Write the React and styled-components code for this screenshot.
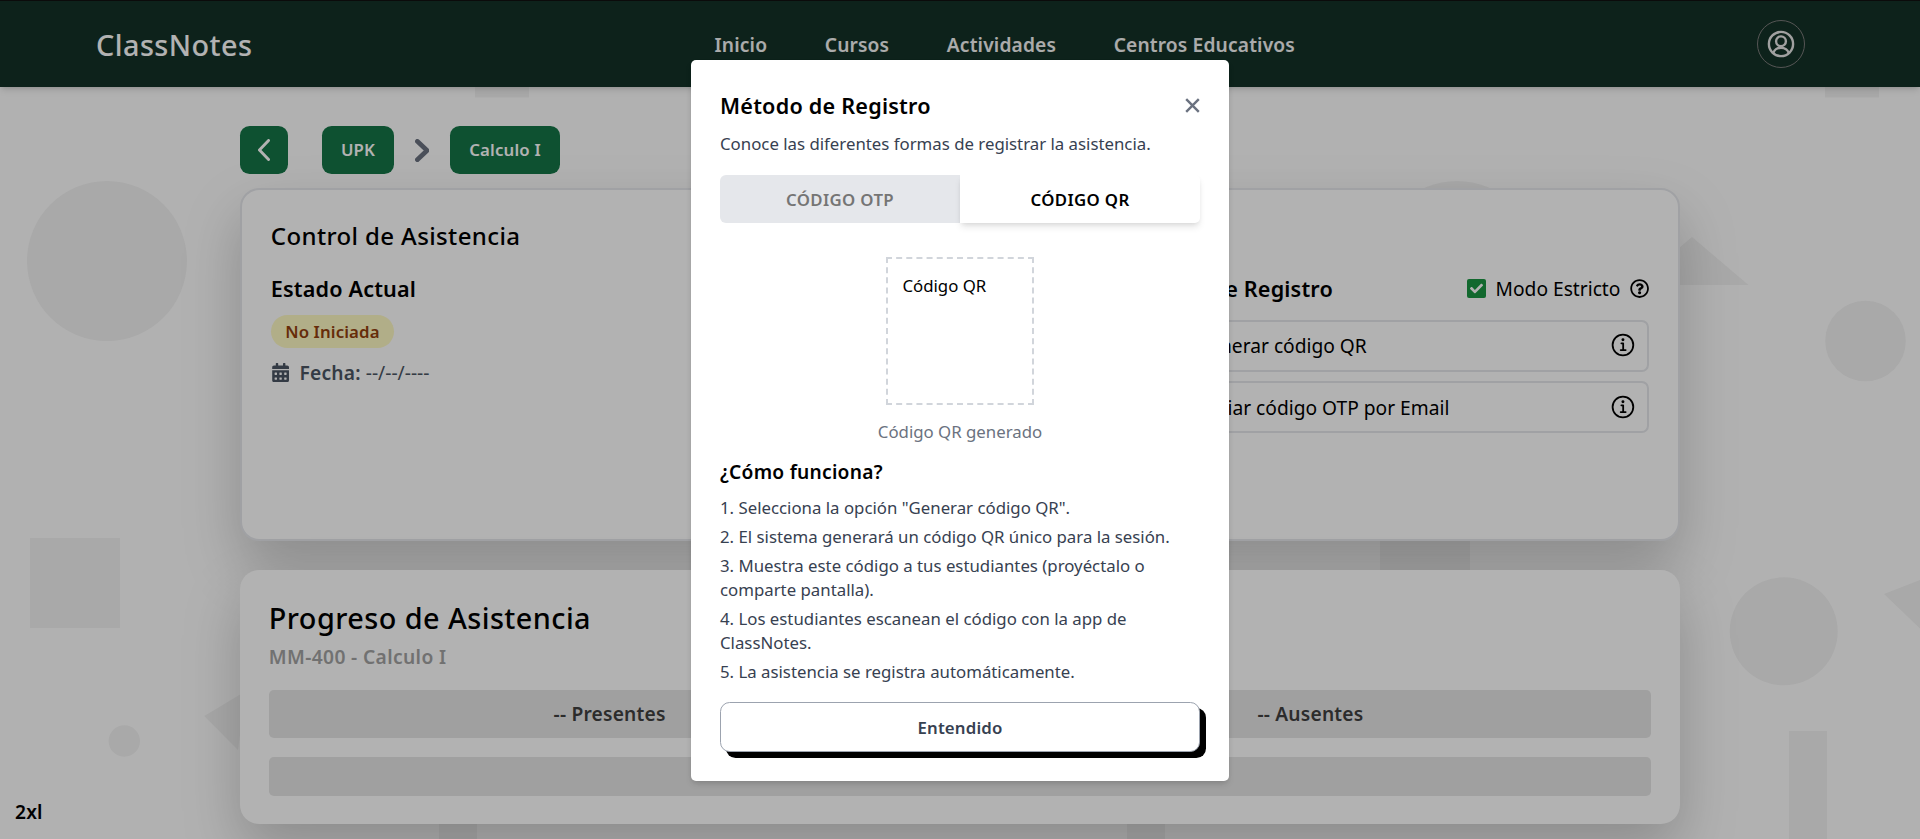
import React from 'react';
import styled, { createGlobalStyle } from 'styled-components';
import { FaCalendarAlt, FaCheck, FaRegQuestionCircle } from 'react-icons/fa';
import { IoInformationCircleOutline } from 'react-icons/io5';

const GlobalStyle = createGlobalStyle`
  *, *::before, *::after { box-sizing: border-box; }
  html { font-size: 19.2px; }
  body {
    margin: 0;
    overflow: hidden;
    background: #fff;
    color: #000;
    font-family: "Noto Sans", sans-serif;
    line-height: 1.5;
  }
  h1, h2, h3, p, ol { margin: 0; padding: 0; font-weight: inherit; }
  button { font: inherit; border: 0; cursor: pointer; }
  svg { display: block; flex-shrink: 0; }
`;

const Page = styled.div`
  position: relative;
  height: 839px;
  overflow: hidden;
  background: #fefefe;
`;

const Backdrop = styled.svg`
  position: absolute;
  inset: 0;
  fill: #f2f2f2;
`;

const Header = styled.header`
  position: relative;
  display: flex;
  align-items: center;
  justify-content: space-between;
  height: 87px;
  padding: 0 115px 0 96px;
  border-top: 1px solid #101010;
  background: #143227;
  box-shadow: 0 4px 7px -1px rgba(0, 0, 0, 0.12), 0 2px 4px -2px rgba(0, 0, 0, 0.12);
`;

const Brand = styled.div`
  padding-top: 2px;
  color: #fff;
  font-size: 1.5rem;
  font-weight: 500;
  letter-spacing: 0.45px;
  line-height: 2rem;
`;

const Nav = styled.nav`
  display: flex;
  gap: 3rem;
  padding-top: 2px;
`;

const NavLink = styled.a`
  color: #f5f5f5;
  font-weight: 600;
  letter-spacing: 0.15px;
`;

const Avatar = styled.div`
  display: grid;
  place-items: center;
  width: 48px;
  height: 48px;
  border: 1px solid #7a7a7a;
  border-radius: 50%;
  color: #e5e5e5;
`;

const Main = styled.main`
  position: relative;
  width: 1440px;
  margin: 0 auto;
  padding-top: 39px;
`;

const Breadcrumb = styled.div`
  display: flex;
  align-items: center;
  height: 48px;
  margin-bottom: 14px;
`;

const Crumb = styled.button`
  display: grid;
  place-items: center;
  height: 48px;
  width: ${(p) => p.$width};
  margin-left: ${(p) => p.$gap || 0};
  padding: 0;
  border-radius: 9.6px;
  background: #157547;
  color: #fff;
  font-size: 0.875rem;
  font-weight: 600;
  letter-spacing: 0.15px;
`;

const Separator = styled.span`
  display: grid;
  place-items: center;
  width: 56px;
  color: #6b7280;
`;

const Card = styled.section`
  height: ${(p) => p.$height};
  margin-bottom: 29px;
  padding: 28.8px;
  border: ${(p) => (p.$bordered ? '2px solid #e5e7eb' : '0')};
  border-radius: 19.2px;
  background: #fff;
  box-shadow: 0 26px 58px rgba(0, 0, 0, 0.21);
`;

const CardTitle = styled.h2`
  margin-bottom: 1rem;
  font-size: 1.25rem;
  font-weight: 500;
  letter-spacing: 0.38px;
  line-height: 1.75rem;
`;

const Columns = styled.div`
  display: flex;
  justify-content: space-between;
`;

const StatusColumn = styled.div`
  display: flex;
  flex-direction: column;
  align-items: flex-start;
  gap: 0.5rem;
`;

const MethodColumn = styled.div`
  width: 526px;
`;

const Subheading = styled.h3`
  font-size: 1.125rem;
  font-weight: 600;
  letter-spacing: 0.16px;
  line-height: 1.75rem;
`;

const Badge = styled.span`
  padding: 0.25rem 0.75rem;
  border-radius: 99px;
  background: #fef9c3;
  color: #92400e;
  font-size: 0.875rem;
  font-weight: 600;
  letter-spacing: 0.12px;
  line-height: 1.25rem;
`;

const DateRow = styled.div`
  display: flex;
  align-items: center;
  gap: 0.5rem;
  color: #4b5563;

  span { padding-top: 1px; }
  b { font-weight: 600; letter-spacing: 0.2px; }
`;

const MethodHeader = styled.div`
  display: flex;
  align-items: center;
  justify-content: space-between;
  height: 33.6px;
  margin-bottom: 14.4px;
`;

const StrictMode = styled.label`
  display: flex;
  align-items: center;
  gap: 9.6px;
  line-height: 1.5rem;

  b { padding-top: 2px; font-weight: 400; }
`;

const CheckBox = styled.span`
  display: grid;
  place-items: center;
  width: 19px;
  height: 19px;
  border-radius: 2px;
  background: #1a9642;
  color: #fff;
  font-size: 13px;
`;

const Method = styled.div`
  display: flex;
  align-items: center;
  justify-content: space-between;
  height: 52px;
  margin-bottom: 9.6px;
  padding: 0 9.6px 0 70px;
  border: 2px solid #e5e7eb;
  border-radius: 7.2px;

  span { padding-top: 2px; }
  svg { font-size: 1.5rem; }
`;

const ProgressTitle = styled.h2`
  font-size: 1.5rem;
  font-weight: 500;
  letter-spacing: 0.45px;
  line-height: 2rem;
`;

const CourseName = styled.p`
  margin: 0.25rem 0 1rem;
  padding-top: 1px;
  height: 28.8px;
  color: #a3a3a3;
  font-weight: 600;
  letter-spacing: 0.37px;
`;

const Counters = styled.div`
  display: grid;
  grid-template-columns: 1fr 1fr;
  gap: 1rem;
  margin-bottom: 1rem;
`;

const Bar = styled.div`
  display: grid;
  place-items: center;
  height: ${(p) => (p.$slim ? '38.4px' : '48px')};
  border-radius: 4.8px;
  background: #e6e6e6;
  color: #404040;
  font-weight: 600;
  letter-spacing: 0.2px;
`;

const Overlay = styled.div`
  position: absolute;
  inset: 0;
  display: flex;
  align-items: center;
  justify-content: center;
  background: rgba(0, 0, 0, 0.3);
`;

const Dialog = styled.div`
  display: flex;
  flex-direction: column;
  width: 537.6px;
  height: 721px;
  margin-top: 2px;
  padding: 28.8px;
  border-radius: 5px;
  background: #fff;
  box-shadow: 0 4px 7px -1px rgba(0, 0, 0, 0.12), 0 2px 5px -2px rgba(0, 0, 0, 0.12);
  font-size: 0.875rem;
  line-height: 1.25rem;
`;

const DialogHeader = styled.div`
  display: flex;
  align-items: center;
  justify-content: space-between;
  height: 33.6px;
  margin-bottom: 9.6px;
`;

const DialogTitle = styled.h2`
  font-size: 1.125rem;
  font-weight: 600;
  letter-spacing: 0.22px;
`;

const CloseButton = styled.button`
  padding: 0;
  background: none;
  color: #6b7280;
`;

const Description = styled.p`
  color: #374151;
`;

const Tabs = styled.div`
  display: flex;
  height: 48px;
  margin-top: 1rem;
`;

const Tab = styled.button`
  flex: 1;
  padding-top: 2px;
  border-radius: ${(p) => (p.$active ? '0 5px 5px 0' : '6px 0 0 6px')};
  background: ${(p) => (p.$active ? '#fff' : '#e5e7eb')};
  color: ${(p) => (p.$active ? '#000' : '#757575')};
  font-weight: 600;
  letter-spacing: 0.35px;
  box-shadow: ${(p) =>
    p.$active
      ? '0 4.8px 7.2px -1.2px rgba(0,0,0,0.1), 0 2.4px 4.8px -2.4px rgba(0,0,0,0.1)'
      : 'none'};
`;

const QrFrame = styled.div`
  align-self: center;
  width: 148px;
  height: 148px;
  margin: 33.6px 0 14.4px;
  padding: 15.2px 14.4px;
  border: 2px dashed #d1d5db;
`;

const QrCaption = styled.p`
  height: 24px;
  padding-top: 1px;
  color: #6b7280;
  text-align: center;
`;

const HowTitle = styled.h3`
  margin: 14.4px 0 9.6px;
  font-size: 1rem;
  font-weight: 600;
  letter-spacing: 0.25px;
  line-height: 1.5rem;
`;

const Steps = styled.div`
  display: flex;
  flex-direction: column;
  gap: 5px;
  color: #374151;
`;

const ConfirmButton = styled.button`
  height: 50px;
  margin-top: auto;
  padding-top: 3px;
  border: 1px solid #9ca3af;
  border-radius: 9.6px;
  background: #fff;
  color: #374151;
  font-weight: 600;
  letter-spacing: 0.15px;
  box-shadow: 6px 6px 0 #000;
`;

const BreakpointTag = styled.div`
  position: absolute;
  left: 15px;
  bottom: 12px;
  font-weight: 600;
  letter-spacing: 0.2px;
`;

const NAV_ITEMS = ['Inicio', 'Cursos', 'Actividades', 'Centros Educativos'];

const METHODS = ['Generar código QR', 'Enviar código OTP por Email'];

const STEPS = [
  'Selecciona la opción "Generar código QR".',
  'El sistema generará un código QR único para la sesión.',
  'Muestra este código a tus estudiantes (proyéctalo o comparte pantalla).',
  'Los estudiantes escanean el código con la app de ClassNotes.',
  'La asistencia se registra automáticamente.',
];

function Chevron({ width, height, stroke, flip }) {
  const s = stroke / 2;
  const near = flip ? s : width - s;
  const tip = flip ? width - s : s;
  return (
    <svg width={width} height={height} fill="none" stroke="currentColor" strokeWidth={stroke} strokeLinecap="round" strokeLinejoin="round">
      <path d={`M${near} ${s}L${tip} ${height / 2}L${near} ${height - s}`} />
    </svg>
  );
}

function UserIcon() {
  return (
    <svg width="28" height="28" viewBox="-14 -14 28 28" fill="none" stroke="currentColor" strokeWidth="2.4">
      <circle r="12.1" />
      <circle cy="-2.7" r="4.9" />
      <path d="M-7.8 9.3A8 7.1 0 0 1 7.8 9.3" />
    </svg>
  );
}

function Shapes() {
  return (
    <Backdrop width="1920" height="839">
      <rect x="475" y="40" width="54" height="57.5" />
      <rect x="1825" y="40" width="54" height="57.5" />
      <circle cx="107" cy="261" r="80" />
      <circle cx="1457" cy="261" r="80" />
      <path d="M1692 237L1748.5 285H1635.5Z" />
      <circle cx="1865.5" cy="341" r="40.3" />
      <rect x="30" y="538" width="90" height="90" />
      <rect x="1380" y="538" width="90" height="90" />
      <circle cx="124.3" cy="741" r="15.7" />
      <path d="M204.3 716L246 691L238 750Z" />
      <circle cx="1783.7" cy="631.3" r="54" />
      <path d="M1884 594L1930 576V638Z" />
      <rect x="439" y="731" width="38" height="120" />
      <rect x="1127" y="731" width="38" height="120" />
      <rect x="1789" y="731" width="38" height="120" />
    </Backdrop>
  );
}

export default function App() {
  return (
    <Page>
      <GlobalStyle />
      <Shapes />
      <Header>
        <Brand>ClassNotes</Brand>
        <Nav>
          {NAV_ITEMS.map((item) => (
            <NavLink key={item}>{item}</NavLink>
          ))}
        </Nav>
        <Avatar>
          <UserIcon />
        </Avatar>
      </Header>

      <Main>
        <Breadcrumb>
          <Crumb $width="48px" aria-label="Volver">
            <Chevron width={12} height={22} stroke={2.9} />
          </Crumb>
          <Crumb $width="72px" $gap="34px">UPK</Crumb>
          <Separator>
            <Chevron width={14.4} height={23} stroke={4.6} flip />
          </Separator>
          <Crumb $width="110px">Calculo I</Crumb>
        </Breadcrumb>

        <Card $height="353px" $bordered>
          <CardTitle>Control de Asistencia</CardTitle>
          <Columns>
            <StatusColumn>
              <Subheading>Estado Actual</Subheading>
              <Badge>No Iniciada</Badge>
              <DateRow>
                <FaCalendarAlt size="19.2" />
                <span>
                  <b>Fecha:</b> --/--/----
                </span>
              </DateRow>
            </StatusColumn>
            <MethodColumn>
              <MethodHeader>
                <Subheading>Método de Registro</Subheading>
                <StrictMode>
                  <CheckBox>
                    <FaCheck />
                  </CheckBox>
                  <b>Modo Estricto</b>
                  <FaRegQuestionCircle size="19.2" />
                </StrictMode>
              </MethodHeader>
              {METHODS.map((method) => (
                <Method key={method}>
                  <span>{method}</span>
                  <IoInformationCircleOutline />
                </Method>
              ))}
            </MethodColumn>
          </Columns>
        </Card>

        <Card $height="254px">
          <ProgressTitle>Progreso de Asistencia</ProgressTitle>
          <CourseName>MM-400 - Calculo I</CourseName>
          <Counters>
            <Bar>-- Presentes</Bar>
            <Bar>-- Ausentes</Bar>
          </Counters>
          <Bar $slim />
        </Card>
      </Main>

      <Overlay>
        <Dialog role="dialog">
          <DialogHeader>
            <DialogTitle>Método de Registro</DialogTitle>
            <CloseButton aria-label="Cerrar">
              <svg width="15" height="15" fill="none" stroke="currentColor" strokeWidth="2.4">
                <path d="M1.2 1.2L13.8 13.8M13.8 1.2L1.2 13.8" />
              </svg>
            </CloseButton>
          </DialogHeader>
          <Description>Conoce las diferentes formas de registrar la asistencia.</Description>
          <Tabs>
            <Tab>CÓDIGO OTP</Tab>
            <Tab $active>CÓDIGO QR</Tab>
          </Tabs>
          <QrFrame>Código QR</QrFrame>
          <QrCaption>Código QR generado</QrCaption>
          <HowTitle>¿Cómo funciona?</HowTitle>
          <Steps>
            {STEPS.map((step, i) => (
              <p key={step}>{`${i + 1}. ${step}`}</p>
            ))}
          </Steps>
          <ConfirmButton>Entendido</ConfirmButton>
        </Dialog>
      </Overlay>

      <BreakpointTag>2xl</BreakpointTag>
    </Page>
  );
}
